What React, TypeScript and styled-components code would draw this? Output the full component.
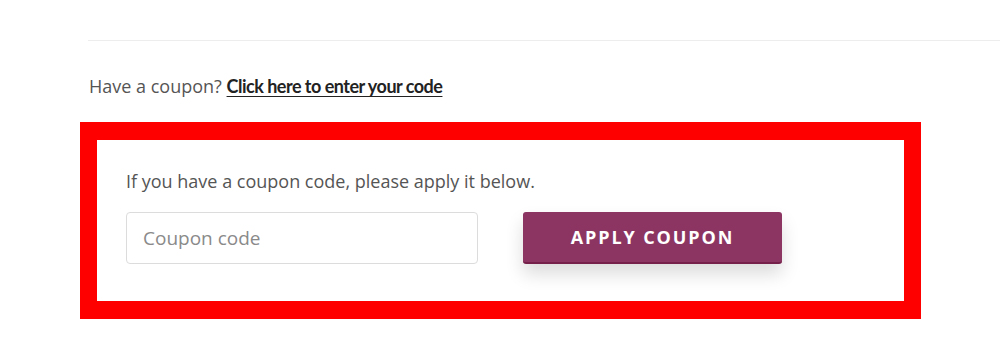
import React from "react";
import styled, { createGlobalStyle } from "styled-components";

const GlobalStyle = createGlobalStyle`
  html, body {
    margin: 0;
    padding: 0;
    background: #ffffff;
  }
  body {
    font-family: "Open Sans", "Liberation Sans", sans-serif;
    color: #555;
  }
`;

const Page = styled.div`
  padding: 40px 0 0 80px;
`;

const Divider = styled.hr`
  margin: 0 0 0 8px;
  border: 0;
  border-top: 1px solid #ededed;
  height: 0;
`;

const Notice = styled.p`
  margin: 31px 0 0 9px;
  font-size: 18px;
  line-height: 28px;
  color: #555;
`;

const NoticeLink = styled.a`
  font-family: Lato, "Open Sans", sans-serif;
  font-size: 18px;
  color: #222;
  font-weight: 700;
  text-decoration: underline;
  text-underline-offset: 3px;
  text-decoration-thickness: 1px;
  letter-spacing: -0.5px;
  cursor: pointer;
`;

const CouponBox = styled.form`
  box-sizing: border-box;
  width: 841px;
  margin-top: 22px;
  border: 17px solid #ff0000;
  border-top-width: 18px;
  border-bottom-width: 18px;
  padding: 27px 30px 37px 29px;
  background: #fff;
`;

const Hint = styled.p`
  margin: 0 0 17px 0;
  font-size: 18px;
  line-height: 28px;
  color: #555;
`;

const Row = styled.div`
  display: flex;
  align-items: stretch;
  gap: 45px;
`;

const CodeInput = styled.input`
  box-sizing: border-box;
  width: 352px;
  height: 52px;
  padding: 0 16px;
  border: 1px solid #dcdcdc;
  border-radius: 4px;
  font-family: inherit;
  font-size: 19px;
  color: #555;
  background: #fff;
  &::placeholder {
    color: #8a8a8a;
  }
`;

const ApplyButton = styled.button`
  box-sizing: border-box;
  width: 259px;
  height: 52px;
  border: 0;
  border-bottom: 2px solid #74204b;
  border-radius: 3px;
  background: #8c3562;
  color: #fff;
  font-family: inherit;
  font-weight: 700;
  font-size: 18px;
  letter-spacing: 1.9px;
  text-transform: uppercase;
  box-shadow: 0 10px 18px rgba(0, 0, 0, 0.14);
  cursor: pointer;
`;

export default function App() {
  return (
    <>
      <GlobalStyle />
      <Page>
        <Divider />
        <Notice>
          Have a coupon? <NoticeLink>Click here to enter your code</NoticeLink>
        </Notice>
        <CouponBox onSubmit={(e) => e.preventDefault()}>
          <Hint>If you have a coupon code, please apply it below.</Hint>
          <Row>
            <CodeInput type="text" placeholder="Coupon code" />
            <ApplyButton type="submit">Apply coupon</ApplyButton>
          </Row>
        </CouponBox>
      </Page>
    </>
  );
}
